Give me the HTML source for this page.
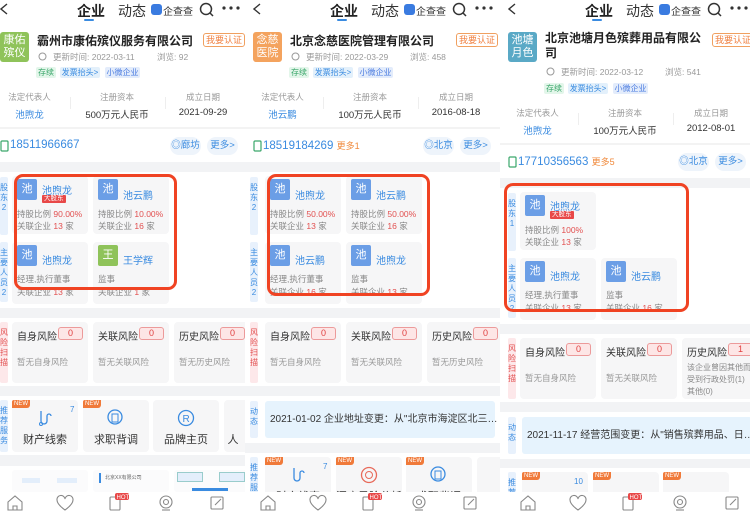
<!DOCTYPE html>
<html><head><meta charset="utf-8">
<style>
*{margin:0;padding:0;box-sizing:border-box}
body{width:750px;height:513px;overflow:hidden;background:#fff;font-family:"Liberation Sans","Noto Sans CJK SC",sans-serif;position:relative}
.p{position:absolute;top:0;width:256px;height:513px;overflow:hidden;background:#f2f3f5}
.a{position:absolute;white-space:nowrap}
.w{position:absolute;background:#fff;left:0;width:256px}
.tab{font-size:14px;color:#333;top:1px}
.logo{left:8px;top:32px;width:29px;height:30px;border-radius:3px;color:#fff;font-size:11px;line-height:13px;text-align:center;padding-top:2px}
.ttl{left:45px;font-size:12px;font-weight:bold;color:#222}
.rz{left:211px;top:33px;width:42px;height:14px;border:1px solid #f0a060;color:#f08040;font-size:9px;line-height:12px;text-align:center;border-radius:3px}
.g{font-size:8.5px;color:#999}
.tag{height:11px;font-size:8px;line-height:11px;text-align:center;border-radius:2px}
.lb{font-size:8.5px;color:#999;text-align:center}
.vl{font-size:9.5px;color:#333;text-align:center}
.blue{color:#3a8be0}
.red{color:#e25050}
.pill{height:18px;background:#eef4fb;border-radius:9px;color:#3a8be0;font-size:9.5px;line-height:18px;text-align:center}
.strip{width:8px;font-size:8px;line-height:10px;text-align:center;border-radius:2px;padding-top:6px}
.sb{background:#e8f1fc;color:#3a8be0}
.sr{background:#fde8ea;color:#e25050}
.card{width:76px;height:58px;background:#f6f6f7;border-radius:4px}
.av{left:5px;top:3px;width:20px;height:21px;background:#6b9ee6;color:#fff;font-size:11px;line-height:21px;text-align:center;border-radius:2px}
.nm{left:30px;font-size:10px;color:#3a8be0}
.dg{left:30px;top:19px;font-size:6.5px;background:#e84848;color:#fff;padding:0 2px;line-height:8px;border-radius:1px}
.ci{left:5px;font-size:8.5px;color:#888}
.rk{width:76px;height:61px;background:#f6f6f7;border-radius:4px}
.rt{left:5px;top:6px;font-size:10px;color:#333}
.bd{left:46px;top:5px;width:25px;height:13px;background:#fde6e6;border:1px solid #ec9a9a;border-radius:3px;color:#e04040;font-size:9px;line-height:11px;text-align:center}
.rn{left:5px;top:34px;font-size:8.5px;color:#999}
.rec{width:66px;height:52px;background:#f6f6f7;border-radius:4px}
.new{left:0;top:0;background:#f07a3a;color:#fff;font-size:6px;line-height:8px;padding:0 2px;border-radius:2px 0 3px 0}
.rl{width:66px;text-align:center;top:31px;font-size:11px;color:#333}
.red3{border:3px solid #f04323;border-radius:9px}
.dt{height:37px;background:#e6f3fd;border-radius:3px;font-size:10px;color:#333;line-height:37px;padding-left:5px}
.nav{left:0;top:492px;width:256px;height:21px;background:#fff}
</style></head><body>

<!-- ================= PANEL 1 ================= -->
<div class="p" style="left:-8px">
 <div class="w" style="top:0;height:162px"></div>
 <svg class="a" style="left:8px;top:3px" width="8" height="12"><polyline points="7,1 1,6 7,11" fill="none" stroke="#333" stroke-width="1.4"/></svg>
 <div class="a tab" style="left:85px;font-weight:bold;color:#222">企业</div>
 <div class="a" style="left:92px;top:19px;width:10px;height:2px;background:#3a8be0;border-radius:1px"></div>
 <div class="a tab" style="left:126px">动态</div>
 <div class="a" style="left:159px;top:4px;width:11px;height:11px;background:#3a7be0;border-radius:3px"></div>
 <div class="a" style="left:171px;top:3px;font-size:10px;color:#333">企查查</div>
 <svg class="a" style="left:207px;top:2px" width="16" height="16"><circle cx="7" cy="7" r="5.5" fill="none" stroke="#333" stroke-width="1.5"/><line x1="11" y1="11" x2="14" y2="14" stroke="#333" stroke-width="1.5"/></svg>
 <svg class="a" style="left:230px;top:6px" width="18" height="4"><circle cx="2" cy="2" r="1.6" fill="#333"/><circle cx="9" cy="2" r="1.6" fill="#333"/><circle cx="16" cy="2" r="1.6" fill="#333"/></svg>
 <div class="a logo" style="background:#8fc35a">康佑<br>殡仪</div>
 <div class="a ttl" style="top:32px">霸州市康佑殡仪服务有限公司</div>
 <div class="a rz">我要认证</div>
 <svg class="a" style="left:46px;top:52px" width="9" height="9"><circle cx="4.5" cy="4.5" r="3.5" fill="none" stroke="#999" stroke-width="1"/></svg>
 <div class="a g" style="left:61px;top:51px">更新时间: 2022-03-11</div>
 <div class="a g" style="left:165px;top:51px">浏览: 92</div>
 <div class="a tag" style="left:44px;top:67px;width:20px;background:#e3f6ea;color:#3aa66a">存续</div>
 <div class="a tag" style="left:68px;top:67px;width:40px;background:#e3f0fb;color:#3a8be0">发票抬头&gt;</div>
 <div class="a tag" style="left:113px;top:67px;width:35px;background:#e3ecfb;color:#4a7be0">小微企业</div>
 <div class="a lb" style="left:0;top:91px;width:75px">法定代表人</div>
 <div class="a lb" style="left:82px;top:91px;width:86px">注册资本</div>
 <div class="a lb" style="left:168px;top:91px;width:86px">成立日期</div>
 <div class="a" style="left:78px;top:97px;width:1px;height:12px;background:#eee"></div>
 <div class="a" style="left:173px;top:97px;width:1px;height:12px;background:#eee"></div>
 <div class="a vl blue" style="left:0;top:107px;width:75px">池煦龙</div>
 <div class="a vl" style="left:82px;top:107px;width:86px">500万元人民币</div>
 <div class="a vl" style="left:168px;top:107px;width:86px">2021-09-29</div>
 <div class="a" style="left:0;top:127px;width:256px;height:2px;background:#f3f3f3"></div>
 <svg class="a" style="left:8px;top:140px" width="9" height="12"><rect x="1" y="1" width="7" height="10" rx="1" fill="none" stroke="#3aa66a" stroke-width="1.2"/></svg>
 <div class="a" style="left:18px;top:139px;font-size:11.5px;color:#3a8be0">18511966667</div>
 <div class="a pill" style="left:178px;top:137px;width:31px">◎廊坊</div>
 <div class="a pill" style="left:215px;top:137px;width:31px">更多&gt;</div>
 <div class="w" style="top:172px;height:136px"></div>
 <div class="a strip sb" style="left:8px;top:177px;height:58px">股<br>东<br>2</div>
 <div class="a strip sb" style="left:8px;top:242px;height:60px">主<br>要<br>人<br>员<br>2</div>
 <div class="a card" style="left:20px;top:176px"><div class="a av">池</div><div class="a nm" style="top:6px">池煦龙</div><div class="a dg">大股东</div><div class="a ci" style="top:32px">持股比例 <span class="red">90.00%</span></div><div class="a ci" style="top:44px">关联企业 <span class="red">13</span> 家</div></div>
 <div class="a card" style="left:101px;top:176px"><div class="a av">池</div><div class="a nm" style="top:11px">池云鹏</div><div class="a ci" style="top:32px">持股比例 <span class="red">10.00%</span></div><div class="a ci" style="top:44px">关联企业 <span class="red">16</span> 家</div></div>
 <div class="a card" style="left:20px;top:242px;height:62px"><div class="a av">池</div><div class="a nm" style="top:10px">池煦龙</div><div class="a ci" style="top:31px">经理,执行董事</div><div class="a ci" style="top:44px">关联企业 <span class="red">13</span> 家</div></div>
 <div class="a card" style="left:101px;top:242px;height:62px"><div class="a av" style="background:#8fc35a">王</div><div class="a nm" style="top:10px">王学辉</div><div class="a ci" style="top:31px">监事</div><div class="a ci" style="top:44px">关联企业 <span class="red">1</span> 家</div></div>
 <div class="a red3" style="left:22px;top:174px;width:163px;height:116px"></div>
 <div class="w" style="top:318px;height:68px"></div>
 <div class="a strip sr" style="left:8px;top:322px;height:61px">风<br>险<br>扫<br>描</div>
 <div class="a rk" style="left:20px;top:322px"><div class="a rt">自身风险</div><div class="a bd">0</div><div class="a rn">暂无自身风险</div></div>
 <div class="a rk" style="left:101px;top:322px"><div class="a rt">关联风险</div><div class="a bd">0</div><div class="a rn">暂无关联风险</div></div>
 <div class="a rk" style="left:182px;top:322px"><div class="a rt">历史风险</div><div class="a bd">0</div><div class="a rn">暂无历史风险</div></div>
 <div class="w" style="top:396px;height:59px"></div>
 <div class="a strip sb" style="left:8px;top:400px;height:52px">推<br>荐<br>服<br>务</div>
 <div class="a rec" style="left:20px;top:400px"><div class="a new">NEW</div><div class="a blue" style="left:58px;top:5px;font-size:8px">7</div><svg class="a" style="left:25px;top:9px" width="16" height="18"><path d="M4 2v10a3 3 0 0 0 6 0V7a2 2 0 0 1 4 0" fill="none" stroke="#3a8be0" stroke-width="1.3"/><circle cx="4" cy="15" r="1.5" fill="none" stroke="#3a8be0"/></svg><div class="a rl">财产线索</div></div>
 <div class="a rec" style="left:91px;top:400px"><div class="a new">NEW</div><svg class="a" style="left:24px;top:9px" width="18" height="18"><circle cx="8" cy="8" r="7" fill="none" stroke="#3a8be0" stroke-width="1.3"/><rect x="5" y="5" width="6" height="8" fill="none" stroke="#3a8be0"/></svg><div class="a rl">求职背调</div></div>
 <div class="a rec" style="left:161px;top:400px"><svg class="a" style="left:24px;top:9px" width="18" height="18"><circle cx="9" cy="9" r="7.5" fill="none" stroke="#3a8be0" stroke-width="1.3"/><text x="5.5" y="13" font-size="10" fill="#3a8be0" font-family="Liberation Sans">R</text></svg><div class="a rl">品牌主页</div></div>
 <div class="a rec" style="left:232px;top:400px"><div class="a rl" style="left:-24px">人</div></div>
 <div class="w" style="top:466px;height:26px"></div>
 <div class="a" style="left:20px;top:470px;width:76px;height:22px;background:#fbfbfc;border-radius:3px"><div class="a" style="left:10px;top:8px;width:18px;height:5px;background:#e3eefb"></div><div class="a" style="left:45px;top:8px;width:20px;height:5px;background:#e3eefb"></div></div>
 <div class="a" style="left:101px;top:470px;width:76px;height:22px;background:#fbfbfc;border-radius:3px"><div class="a" style="left:6px;top:3px;width:2px;height:10px;background:#3a8be0"></div><div class="a" style="left:12px;top:4px;font-size:5px;color:#666">北京XX有限公司</div></div>
 <div class="a" style="left:182px;top:470px;width:76px;height:22px;background:#fbfbfc;border-radius:3px"><div class="a" style="left:3px;top:2px;width:26px;height:10px;background:#e3eefb;border:1px solid #9cc"></div><div class="a" style="left:45px;top:2px;width:26px;height:10px;background:#e3eefb;border:1px solid #9cc"></div><div class="a" style="left:18px;top:18px;width:36px;height:3px;background:#3a8be0"></div></div>
 <div class="a nav"></div>
 <svg class="a" style="left:0;top:492px" width="256" height="21">
  <g fill="none" stroke="#888" stroke-width="1.1">
  <path d="M16 10l7-6 7 6v8h-14z M21 18v-4h4v4"/>
  <path d="M73 18c-7-5-8-8-8-10a4 4 0 0 1 8-1a4 4 0 0 1 8 1c0 2-1 5-8 10z"/>
  <rect x="118" y="5" width="10" height="13" rx="1"/>
  <circle cx="174" cy="10" r="6"/><circle cx="174" cy="10" r="2.5"/><path d="M170 18h8"/>
  <rect x="219" y="5" width="12" height="12" rx="1"/><path d="M223 13l6-6"/>
  </g>
  <rect x="123" y="1" width="14" height="7" rx="2" fill="#e84848"/><text x="124.5" y="7" font-size="6" fill="#fff" font-family="Liberation Sans">HOT</text>
 </svg>
</div>

<!-- ================= PANEL 2 ================= -->
<div class="p" style="left:245px">
 <div class="w" style="top:0;height:162px"></div>
 <svg class="a" style="left:8px;top:3px" width="8" height="12"><polyline points="7,1 1,6 7,11" fill="none" stroke="#333" stroke-width="1.4"/></svg>
 <div class="a tab" style="left:85px;font-weight:bold;color:#222">企业</div>
 <div class="a" style="left:92px;top:19px;width:10px;height:2px;background:#3a8be0;border-radius:1px"></div>
 <div class="a tab" style="left:126px">动态</div>
 <div class="a" style="left:159px;top:4px;width:11px;height:11px;background:#3a7be0;border-radius:3px"></div>
 <div class="a" style="left:171px;top:3px;font-size:10px;color:#333">企查查</div>
 <svg class="a" style="left:207px;top:2px" width="16" height="16"><circle cx="7" cy="7" r="5.5" fill="none" stroke="#333" stroke-width="1.5"/><line x1="11" y1="11" x2="14" y2="14" stroke="#333" stroke-width="1.5"/></svg>
 <svg class="a" style="left:230px;top:6px" width="18" height="4"><circle cx="2" cy="2" r="1.6" fill="#333"/><circle cx="9" cy="2" r="1.6" fill="#333"/><circle cx="16" cy="2" r="1.6" fill="#333"/></svg>
 <div class="a logo" style="background:#f4a35e">念慈<br>医院</div>
 <div class="a ttl" style="top:32px">北京念慈医院管理有限公司</div>
 <div class="a rz">我要认证</div>
 <svg class="a" style="left:46px;top:52px" width="9" height="9"><circle cx="4.5" cy="4.5" r="3.5" fill="none" stroke="#999" stroke-width="1"/></svg>
 <div class="a g" style="left:61px;top:51px">更新时间: 2022-03-29</div>
 <div class="a g" style="left:165px;top:51px">浏览: 458</div>
 <div class="a tag" style="left:44px;top:67px;width:20px;background:#e3f6ea;color:#3aa66a">存续</div>
 <div class="a tag" style="left:68px;top:67px;width:40px;background:#e3f0fb;color:#3a8be0">发票抬头&gt;</div>
 <div class="a tag" style="left:113px;top:67px;width:35px;background:#e3ecfb;color:#4a7be0">小微企业</div>
 <div class="a lb" style="left:0;top:91px;width:75px">法定代表人</div>
 <div class="a lb" style="left:82px;top:91px;width:86px">注册资本</div>
 <div class="a lb" style="left:168px;top:91px;width:86px">成立日期</div>
 <div class="a" style="left:78px;top:97px;width:1px;height:12px;background:#eee"></div>
 <div class="a" style="left:173px;top:97px;width:1px;height:12px;background:#eee"></div>
 <div class="a vl blue" style="left:0;top:107px;width:75px">池云鹏</div>
 <div class="a vl" style="left:82px;top:107px;width:86px">100万元人民币</div>
 <div class="a vl" style="left:168px;top:107px;width:86px">2016-08-18</div>
 <div class="a" style="left:0;top:127px;width:256px;height:2px;background:#f3f3f3"></div>
 <svg class="a" style="left:8px;top:140px" width="9" height="12"><rect x="1" y="1" width="7" height="10" rx="1" fill="none" stroke="#3aa66a" stroke-width="1.2"/></svg>
 <div class="a" style="left:18px;top:139px;font-size:11.5px;color:#3a8be0">18519184269 <span style="color:#f08a3c;font-size:9px">更多1</span></div>
 <div class="a pill" style="left:178px;top:137px;width:31px">◎北京</div>
 <div class="a pill" style="left:215px;top:137px;width:31px">更多&gt;</div>
 <div class="w" style="top:172px;height:136px"></div>
 <div class="a strip sb" style="left:5px;top:177px;height:58px">股<br>东<br>2</div>
 <div class="a strip sb" style="left:5px;top:242px;height:60px">主<br>要<br>人<br>员<br>2</div>
 <div class="a card" style="left:20px;top:176px"><div class="a av">池</div><div class="a nm" style="top:11px">池煦龙</div><div class="a ci" style="top:32px">持股比例 <span class="red">50.00%</span></div><div class="a ci" style="top:44px">关联企业 <span class="red">13</span> 家</div></div>
 <div class="a card" style="left:101px;top:176px"><div class="a av">池</div><div class="a nm" style="top:11px">池云鹏</div><div class="a ci" style="top:32px">持股比例 <span class="red">50.00%</span></div><div class="a ci" style="top:44px">关联企业 <span class="red">16</span> 家</div></div>
 <div class="a card" style="left:20px;top:242px;height:62px"><div class="a av">池</div><div class="a nm" style="top:10px">池云鹏</div><div class="a ci" style="top:31px">经理,执行董事</div><div class="a ci" style="top:44px">关联企业 <span class="red">16</span> 家</div></div>
 <div class="a card" style="left:101px;top:242px;height:62px"><div class="a av">池</div><div class="a nm" style="top:10px">池煦龙</div><div class="a ci" style="top:31px">监事</div><div class="a ci" style="top:44px">关联企业 <span class="red">13</span> 家</div></div>
 <div class="a red3" style="left:22px;top:174px;width:163px;height:122px"></div>
 <div class="w" style="top:318px;height:68px"></div>
 <div class="a strip sr" style="left:5px;top:322px;height:61px">风<br>险<br>扫<br>描</div>
 <div class="a rk" style="left:20px;top:322px"><div class="a rt">自身风险</div><div class="a bd">0</div><div class="a rn">暂无自身风险</div></div>
 <div class="a rk" style="left:101px;top:322px"><div class="a rt">关联风险</div><div class="a bd">0</div><div class="a rn">暂无关联风险</div></div>
 <div class="a rk" style="left:182px;top:322px"><div class="a rt">历史风险</div><div class="a bd">0</div><div class="a rn">暂无历史风险</div></div>
 <div class="w" style="top:396px;height:47px"></div>
 <div class="a strip sb" style="left:5px;top:401px;height:37px">动<br>态</div>
 <div class="a dt" style="left:20px;top:401px;width:230px">2021-01-02 企业地址变更：从"北京市海淀区北三…</div>
 <div class="w" style="top:453px;height:40px"></div>
 <div class="a strip sb" style="left:5px;top:457px;height:40px">推<br>荐<br>服</div>
 <div class="a rec" style="left:20px;top:457px"><div class="a new">NEW</div><div class="a blue" style="left:58px;top:5px;font-size:8px">7</div><svg class="a" style="left:25px;top:9px" width="16" height="18"><path d="M4 2v10a3 3 0 0 0 6 0V7a2 2 0 0 1 4 0" fill="none" stroke="#3a8be0" stroke-width="1.3"/></svg><div class="a rl">财产线索</div></div>
 <div class="a rec" style="left:91px;top:457px"><div class="a new">NEW</div><svg class="a" style="left:24px;top:9px" width="18" height="18"><circle cx="9" cy="9" r="7.5" fill="none" stroke="#e86a5a" stroke-width="1.3"/><circle cx="9" cy="9" r="3.5" fill="none" stroke="#e86a5a"/></svg><div class="a rl">深度风险分析</div></div>
 <div class="a rec" style="left:161px;top:457px"><div class="a new">NEW</div><svg class="a" style="left:24px;top:9px" width="18" height="18"><circle cx="8" cy="8" r="7" fill="none" stroke="#3a8be0" stroke-width="1.3"/><rect x="5" y="5" width="6" height="8" fill="none" stroke="#3a8be0"/></svg><div class="a rl">求职背调</div></div>
 <div class="a rec" style="left:232px;top:457px"></div>
 <div class="a nav"></div>
 <svg class="a" style="left:0;top:492px" width="256" height="21">
  <g fill="none" stroke="#888" stroke-width="1.1">
  <path d="M16 10l7-6 7 6v8h-14z M21 18v-4h4v4"/>
  <path d="M73 18c-7-5-8-8-8-10a4 4 0 0 1 8-1a4 4 0 0 1 8 1c0 2-1 5-8 10z"/>
  <rect x="118" y="5" width="10" height="13" rx="1"/>
  <circle cx="174" cy="10" r="6"/><circle cx="174" cy="10" r="2.5"/><path d="M170 18h8"/>
  <rect x="219" y="5" width="12" height="12" rx="1"/><path d="M223 13l6-6"/>
  </g>
  <rect x="123" y="1" width="14" height="7" rx="2" fill="#e84848"/><text x="124.5" y="7" font-size="6" fill="#fff" font-family="Liberation Sans">HOT</text>
 </svg>
</div>

<!-- ================= PANEL 3 ================= -->
<div class="p" style="left:500px;width:250px">
 <div class="w" style="top:0;height:178px"></div>
 <svg class="a" style="left:8px;top:3px" width="8" height="12"><polyline points="7,1 1,6 7,11" fill="none" stroke="#333" stroke-width="1.4"/></svg>
 <div class="a tab" style="left:85px;font-weight:bold;color:#222">企业</div>
 <div class="a" style="left:92px;top:19px;width:10px;height:2px;background:#3a8be0;border-radius:1px"></div>
 <div class="a tab" style="left:126px">动态</div>
 <div class="a" style="left:159px;top:4px;width:11px;height:11px;background:#3a7be0;border-radius:3px"></div>
 <div class="a" style="left:171px;top:3px;font-size:10px;color:#333">企查查</div>
 <svg class="a" style="left:207px;top:2px" width="16" height="16"><circle cx="7" cy="7" r="5.5" fill="none" stroke="#333" stroke-width="1.5"/><line x1="11" y1="11" x2="14" y2="14" stroke="#333" stroke-width="1.5"/></svg>
 <svg class="a" style="left:230px;top:6px" width="18" height="4"><circle cx="2" cy="2" r="1.6" fill="#333"/><circle cx="9" cy="2" r="1.6" fill="#333"/><circle cx="16" cy="2" r="1.6" fill="#333"/></svg>
 <div class="a logo" style="background:#5aa9c6">池塘<br>月色</div>
 <div class="a ttl" style="top:31px;line-height:15px">北京池塘月色殡葬用品有限公<br>司</div>
 <div class="a rz" style="left:212px">我要认证</div>
 <svg class="a" style="left:46px;top:67px" width="9" height="9"><circle cx="4.5" cy="4.5" r="3.5" fill="none" stroke="#999" stroke-width="1"/></svg>
 <div class="a g" style="left:61px;top:66px">更新时间: 2022-03-12</div>
 <div class="a g" style="left:165px;top:66px">浏览: 541</div>
 <div class="a tag" style="left:44px;top:83px;width:20px;background:#e3f6ea;color:#3aa66a">存续</div>
 <div class="a tag" style="left:68px;top:83px;width:40px;background:#e3f0fb;color:#3a8be0">发票抬头&gt;</div>
 <div class="a tag" style="left:113px;top:83px;width:35px;background:#e3ecfb;color:#4a7be0">小微企业</div>
 <div class="a lb" style="left:0;top:107px;width:75px">法定代表人</div>
 <div class="a lb" style="left:82px;top:107px;width:86px">注册资本</div>
 <div class="a lb" style="left:168px;top:107px;width:86px">成立日期</div>
 <div class="a" style="left:78px;top:113px;width:1px;height:12px;background:#eee"></div>
 <div class="a" style="left:173px;top:113px;width:1px;height:12px;background:#eee"></div>
 <div class="a vl blue" style="left:0;top:123px;width:75px">池煦龙</div>
 <div class="a vl" style="left:82px;top:123px;width:86px">100万元人民币</div>
 <div class="a vl" style="left:168px;top:123px;width:86px">2012-08-01</div>
 <div class="a" style="left:0;top:143px;width:256px;height:2px;background:#f3f3f3"></div>
 <svg class="a" style="left:8px;top:156px" width="9" height="12"><rect x="1" y="1" width="7" height="10" rx="1" fill="none" stroke="#3aa66a" stroke-width="1.2"/></svg>
 <div class="a" style="left:18px;top:155px;font-size:11.5px;color:#3a8be0">17710356563 <span style="color:#f08a3c;font-size:9px">更多5</span></div>
 <div class="a pill" style="left:178px;top:153px;width:31px">◎北京</div>
 <div class="a pill" style="left:215px;top:153px;width:31px">更多&gt;</div>
 <div class="w" style="top:188px;height:136px"></div>
 <div class="a strip sb" style="left:8px;top:193px;height:58px">股<br>东<br>1</div>
 <div class="a strip sb" style="left:8px;top:258px;height:60px">主<br>要<br>人<br>员<br>2</div>
 <div class="a card" style="left:20px;top:192px"><div class="a av">池</div><div class="a nm" style="top:6px">池煦龙</div><div class="a dg">大股东</div><div class="a ci" style="top:32px">持股比例 <span class="red">100%</span></div><div class="a ci" style="top:44px">关联企业 <span class="red">13</span> 家</div></div>
 <div class="a card" style="left:20px;top:258px;height:62px"><div class="a av">池</div><div class="a nm" style="top:10px">池煦龙</div><div class="a ci" style="top:31px">经理,执行董事</div><div class="a ci" style="top:44px">关联企业 <span class="red">13</span> 家</div></div>
 <div class="a card" style="left:101px;top:258px;height:62px"><div class="a av">池</div><div class="a nm" style="top:10px">池云鹏</div><div class="a ci" style="top:31px">监事</div><div class="a ci" style="top:44px">关联企业 <span class="red">16</span> 家</div></div>
 <div class="a red3" style="left:4px;top:183px;width:185px;height:129px"></div>
 <div class="w" style="top:334px;height:68px"></div>
 <div class="a strip sr" style="left:8px;top:338px;height:61px">风<br>险<br>扫<br>描</div>
 <div class="a rk" style="left:20px;top:338px"><div class="a rt">自身风险</div><div class="a bd">0</div><div class="a rn">暂无自身风险</div></div>
 <div class="a rk" style="left:101px;top:338px"><div class="a rt">关联风险</div><div class="a bd">0</div><div class="a rn">暂无关联风险</div></div>
 <div class="a rk" style="left:182px;top:338px"><div class="a rt">历史风险</div><div class="a bd">1</div><div class="a" style="left:5px;top:24px;font-size:8px;color:#888;line-height:12px">该企业曾因其他而<br>受到行政处罚(1)<br>其他(0)</div></div>
 <div class="w" style="top:412px;height:47px"></div>
 <div class="a strip sb" style="left:8px;top:417px;height:37px">动<br>态</div>
 <div class="a dt" style="left:22px;top:417px;width:230px">2021-11-17 经营范围变更：从"销售殡葬用品、日…</div>
 <div class="w" style="top:468px;height:25px"></div>
 <div class="a strip sb" style="left:8px;top:472px;height:30px">推<br>荐</div>
 <div class="a rec" style="left:22px;top:472px"><div class="a new">NEW</div><div class="a blue" style="left:52px;top:5px;font-size:8px">10</div></div>
 <div class="a rec" style="left:93px;top:472px"><div class="a new">NEW</div></div>
 <div class="a rec" style="left:163px;top:472px"><div class="a new">NEW</div></div>
 <div class="a nav"></div>
 <svg class="a" style="left:0;top:492px" width="256" height="21">
  <g fill="none" stroke="#888" stroke-width="1.1">
  <path d="M21 10l7-6 7 6v8h-14z M26 18v-4h4v4"/>
  <path d="M78 18c-7-5-8-8-8-10a4 4 0 0 1 8-1a4 4 0 0 1 8 1c0 2-1 5-8 10z"/>
  <rect x="123" y="5" width="10" height="13" rx="1"/>
  <circle cx="180" cy="10" r="6"/><circle cx="180" cy="10" r="2.5"/><path d="M176 18h8"/>
  <rect x="226" y="5" width="12" height="12" rx="1"/><path d="M230 13l6-6"/>
  </g>
  <rect x="128" y="1" width="14" height="7" rx="2" fill="#e84848"/><text x="129.5" y="7" font-size="6" fill="#fff" font-family="Liberation Sans">HOT</text>
 </svg>
</div>
</body></html>
